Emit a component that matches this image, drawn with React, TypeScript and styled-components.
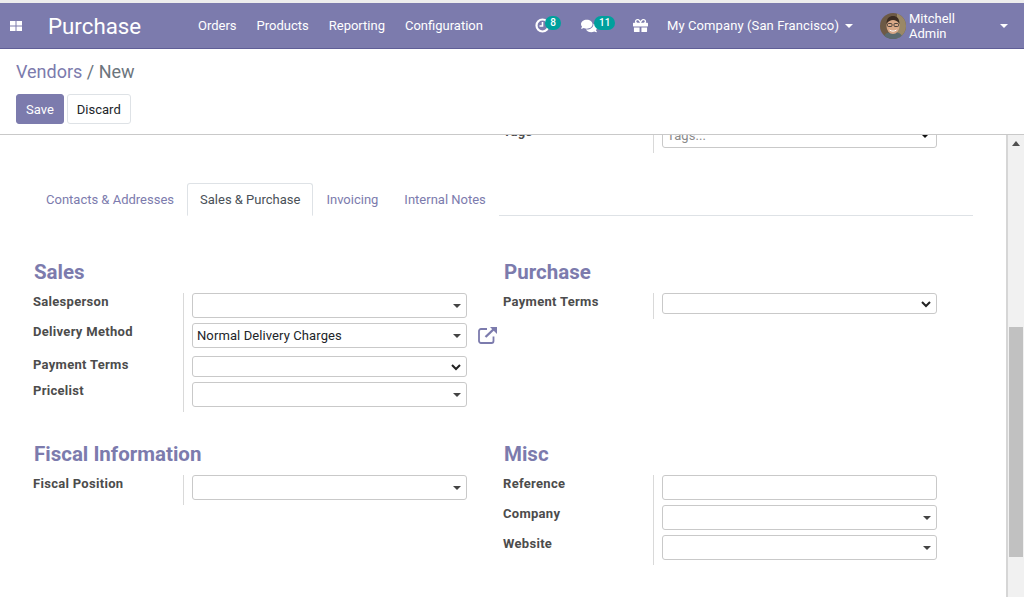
import React from 'react';
import styled, { createGlobalStyle } from 'styled-components';
import { FaComments, FaGift } from 'react-icons/fa';

const GlobalStyle = createGlobalStyle`
  html, body {
    margin: 0;
    padding: 0;
    height: 100%;
    overflow: hidden;
    background: #fff;
    font-family: Roboto, "Liberation Sans", sans-serif;
  }
  * {
    box-sizing: border-box;
  }
`;

const Page = styled.div`
  display: flex;
  flex-direction: column;
  height: 597px;
  width: 1024px;
  border-top: 3px solid #ededed;
`;

const Navbar = styled.header`
  display: flex;
  align-items: center;
  flex: 0 0 46px;
  padding: 0 16px 0 10px;
  background: #7c7bad;
  border-bottom: 1px solid #5f5e97;
  color: #fff;
  font-size: 13px;
`;

const AppsIcon = styled.svg`
  width: 12px;
  height: 10px;
  fill: #fff;
  flex: none;
`;

const Brand = styled.div`
  margin-left: 26px;
  width: 150px;
  font-size: 22.3px;
  line-height: 30px;
`;

const Menu = styled.nav`
  display: flex;
  gap: 20px;
`;

const MenuItem = styled.span`
  line-height: 20px;
`;

const Systray = styled.div`
  display: flex;
  align-items: center;
  margin-left: auto;
`;

const TrayIcon = styled.div<{ $width: number }>`
  position: relative;
  display: flex;
  align-items: center;
  width: ${(p) => p.$width}px;
  height: 20px;
`;

const Badge = styled.span<{ $left: number }>`
  position: absolute;
  left: ${(p) => p.$left}px;
  top: 0;
  min-width: 16px;
  height: 14px;
  padding: 0 5px;
  border-radius: 7px;
  background: #00a09d;
  color: #fff;
  font-size: 10px;
  font-weight: 500;
  line-height: 13px;
  text-align: center;
`;

const Company = styled.div`
  display: flex;
  align-items: center;
  margin-left: 4px;
  width: 213px;
  letter-spacing: 0.1px;
`;

const NavCaret = styled.span`
  margin-left: 6px;
  border-top: 4px solid #fff;
  border-left: 4px solid transparent;
  border-right: 4px solid transparent;
`;

const UserName = styled.span`
  margin-left: 3px;
  width: 85px;
`;

const Avatar = styled.svg`
  width: 26px;
  height: 26px;
  flex: none;
  border-radius: 50%;
`;

const ControlPanel = styled.div`
  flex: 0 0 86px;
  padding: 12px 16px 0;
  background: #fff;
  border-bottom: 1px solid #c9c9c9;
`;

const Breadcrumb = styled.div`
  font-size: 18px;
  line-height: 22px;
  color: #6c757d;
`;

const CrumbLink = styled.span`
  color: #7c7bad;
`;

const Buttons = styled.div`
  display: flex;
  gap: 3px;
  margin-top: 11px;
`;

const Button = styled.button<{ $primary?: boolean }>`
  height: 30px;
  padding: 0 9px;
  border: 1px solid ${(p) => (p.$primary ? '#7c7bad' : '#dee2e6')};
  border-radius: 3px;
  background: ${(p) => (p.$primary ? '#7c7bad' : '#fff')};
  color: ${(p) => (p.$primary ? '#fff' : '#212529')};
  font-family: inherit;
  font-size: 13px;
`;

const Body = styled.div`
  display: flex;
  flex: 1;
  min-height: 0;
`;

const Scroller = styled.main`
  flex: 1;
  min-width: 0;
  overflow: hidden;
  padding: 0 33px;
`;

const TopRow = styled.div`
  margin: -12px 0 0 470px;
`;

const Tabs = styled.div`
  display: flex;
  margin-top: 30px;
  width: 940px;
  height: 33px;
  border-bottom: 1px solid #dee2e6;
  font-size: 13px;
`;

const Tab = styled.div<{ $active?: boolean }>`
  height: 33px;
  padding: 7px 12px 0;
  line-height: 18px;
  color: ${(p) => (p.$active ? '#495057' : '#7c7bad')};
  background: #fff;
  border: 1px solid ${(p) => (p.$active ? '#dee2e6' : 'transparent')};
  border-bottom-color: ${(p) => (p.$active ? '#fff' : 'transparent')};
  border-radius: 3px 3px 0 0;
`;

const Groups = styled.div`
  display: grid;
  grid-template-columns: 470px 470px;
  row-gap: 28px;
  margin-top: 42px;
`;

const GroupTitle = styled.h2`
  margin: 0 0 0 1px;
  height: 35px;
  font-size: 20.5px;
  line-height: 28px;
  font-weight: 700;
  color: #7c7bad;
`;

const Row = styled.div<{ $height?: number }>`
  display: flex;
  height: ${(p) => p.$height ?? 30}px;
`;

const Label = styled.label`
  flex: 0 0 151px;
  border-right: 1px solid #d9d9d9;
  font-size: 13px;
  font-weight: 700;
  letter-spacing: 0.3px;
  line-height: 18px;
  color: #4c4c4c;
`;

const Cell = styled.div`
  display: flex;
  align-items: flex-start;
  padding-left: 8px;
`;

const Box = styled.div<{ $height?: number }>`
  display: flex;
  align-items: center;
  justify-content: space-between;
  width: 275px;
  height: ${(p) => p.$height ?? 25}px;
  padding: 0 4px;
  border: 1px solid #c9c9c9;
  border-radius: 3px;
  background: #fff;
  font-size: 13px;
  letter-spacing: 0.1px;
  color: #212529;
`;

const Placeholder = styled.span`
  color: #8a8a8a;
`;

const Caret = styled.span<{ $strong?: boolean }>`
  margin-left: auto;
  margin-right: ${(p) => (p.$strong ? 3 : 1)}px;
  border-top: 4px solid ${(p) => (p.$strong ? '#111' : '#444')};
  border-left: 4px solid transparent;
  border-right: 4px solid transparent;
`;

const Chevron = styled.svg`
  margin-left: auto;
  margin-right: 1px;
  width: 10px;
  height: 8px;
  fill: none;
  stroke: #222;
  stroke-width: 2;
`;

const ExternalIcon = styled.svg`
  flex: none;
  width: 20px;
  height: 18px;
  margin: 3px 0 0 11px;
  fill: none;
  stroke: #7c7bad;
`;

const Scrollbar = styled.div`
  display: flex;
  flex-direction: column;
  align-items: center;
  flex: 0 0 18px;
  background: #f1f1f1;
  border-left: 2px solid #d6d6d6;
`;

const ScrollArrow = styled.span`
  margin-top: 6px;
  border-bottom: 5px solid #505050;
  border-left: 4px solid transparent;
  border-right: 4px solid transparent;
`;

const ScrollThumb = styled.div`
  margin-top: 181px;
  width: 14px;
  height: 230px;
  background: #c1c1c1;
`;

const Select = ({ height }: { height?: number }) => (
  <Box $height={height}>
    <Caret />
  </Box>
);

const NativeSelect = () => (
  <Box $height={21}>
    <Chevron viewBox="0 0 10 8">
      <path d="M1 2l4 4 4-4" />
    </Chevron>
  </Box>
);

export default function App() {
  return (
    <>
      <GlobalStyle />
      <Page>
        <Navbar>
          <AppsIcon viewBox="0 0 12 10">
            <rect x="0" y="0" width="5.5" height="4.5" />
            <rect x="6.5" y="0" width="5.5" height="4.5" />
            <rect x="0" y="5.5" width="5.5" height="4.5" />
            <rect x="6.5" y="5.5" width="5.5" height="4.5" />
          </AppsIcon>
          <Brand>Purchase</Brand>
          <Menu>
            <MenuItem>Orders</MenuItem>
            <MenuItem>Products</MenuItem>
            <MenuItem>Reporting</MenuItem>
            <MenuItem>Configuration</MenuItem>
          </Menu>
          <Systray>
            <TrayIcon $width={46}>
              <svg width="15" height="15" viewBox="0 0 15 15" fill="none" stroke="#fff">
                <circle cx="7.5" cy="7.5" r="6" strokeWidth="2.2" />
                <path d="M7.5 4v4H4.5" strokeWidth="1.6" />
              </svg>
              <Badge $left={10}>8</Badge>
            </TrayIcon>
            <TrayIcon $width={52}>
              <FaComments size={16} color="#fff" />
              <Badge $left={13}>11</Badge>
            </TrayIcon>
            <TrayIcon $width={30}>
              <FaGift size={15} color="#fff" />
            </TrayIcon>
            <Company>
              My Company (San Francisco)
              <NavCaret />
            </Company>
            <Avatar viewBox="0 0 26 26">
              <rect width="26" height="26" fill="#6d5a45" />
              <rect x="17" width="9" height="26" fill="#9a8866" />
              <path d="M3 26c1-6 5-7 10-7s9 1 10 7z" fill="#5a6a6e" />
              <ellipse cx="13" cy="13" rx="6.5" ry="8" fill="#d9a988" />
              <path d="M6.5 11c0-6 3-8 6.500-8s6.500 2 6.500 8c-2-3-4-4-6.500-4s-4.500 1-6.500 4z" fill="#3b2c22" />
              <rect x="7.500" y="10.500" width="4.500" height="3" rx="1" fill="none" stroke="#2b2b2b" strokeWidth=".8" />
              <rect x="14" y="10.500" width="4.500" height="3" rx="1" fill="none" stroke="#2b2b2b" strokeWidth=".8" />
              <path d="M9.500 17c2 1.500 5 1.500 7 0" fill="none" stroke="#fff" strokeWidth="1" />
            </Avatar>
            <UserName>Mitchell Admin</UserName>
            <NavCaret />
          </Systray>
        </Navbar>

        <ControlPanel>
          <Breadcrumb>
            <CrumbLink>Vendors</CrumbLink> / New
          </Breadcrumb>
          <Buttons>
            <Button $primary>Save</Button>
            <Button>Discard</Button>
          </Buttons>
        </ControlPanel>

        <Body>
          <Scroller>
            <TopRow>
              <Row>
                <Label>Tags</Label>
                <Cell>
                  <Box>
                    <Placeholder>Tags...</Placeholder>
                    <Caret $strong />
                  </Box>
                </Cell>
              </Row>
            </TopRow>

            <Tabs>
              <Tab>Contacts &amp; Addresses</Tab>
              <Tab $active>Sales &amp; Purchase</Tab>
              <Tab>Invoicing</Tab>
              <Tab>Internal Notes</Tab>
            </Tabs>

            <Groups>
              <section>
                <GroupTitle>Sales</GroupTitle>
                <Row>
                  <Label>Salesperson</Label>
                  <Cell><Select /></Cell>
                </Row>
                <Row $height={33}>
                  <Label>Delivery Method</Label>
                  <Cell>
                    <Box>
                      Normal Delivery Charges
                      <Caret />
                    </Box>
                    <ExternalIcon viewBox="0 0 20 18">
                      <path d="M15.500 10.500v4.500a2 2 0 0 1-2 2h-10.500a2 2 0 0 1-2-2v-10a2 2 0 0 1 2-2h6" strokeWidth="1.800" />
                      <path d="M7.500 11L17 2" strokeWidth="2.400" />
                      <path d="M12 1h7v7z" fill="#7c7bad" stroke="none" />
                    </ExternalIcon>
                  </Cell>
                </Row>
                <Row $height={26}>
                  <Label>Payment Terms</Label>
                  <Cell><NativeSelect /></Cell>
                </Row>
                <Row>
                  <Label>Pricelist</Label>
                  <Cell><Select /></Cell>
                </Row>
              </section>

              <section>
                <GroupTitle>Purchase</GroupTitle>
                <Row $height={26}>
                  <Label>Payment Terms</Label>
                  <Cell><NativeSelect /></Cell>
                </Row>
              </section>

              <section>
                <GroupTitle>Fiscal Information</GroupTitle>
                <Row>
                  <Label>Fiscal Position</Label>
                  <Cell><Select /></Cell>
                </Row>
              </section>

              <section>
                <GroupTitle>Misc</GroupTitle>
                <Row>
                  <Label>Reference</Label>
                  <Cell><Box /></Cell>
                </Row>
                <Row>
                  <Label>Company</Label>
                  <Cell><Select /></Cell>
                </Row>
                <Row>
                  <Label>Website</Label>
                  <Cell><Select /></Cell>
                </Row>
              </section>
            </Groups>
          </Scroller>
          <Scrollbar>
            <ScrollArrow />
            <ScrollThumb />
          </Scrollbar>
        </Body>
      </Page>
    </>
  );
}
